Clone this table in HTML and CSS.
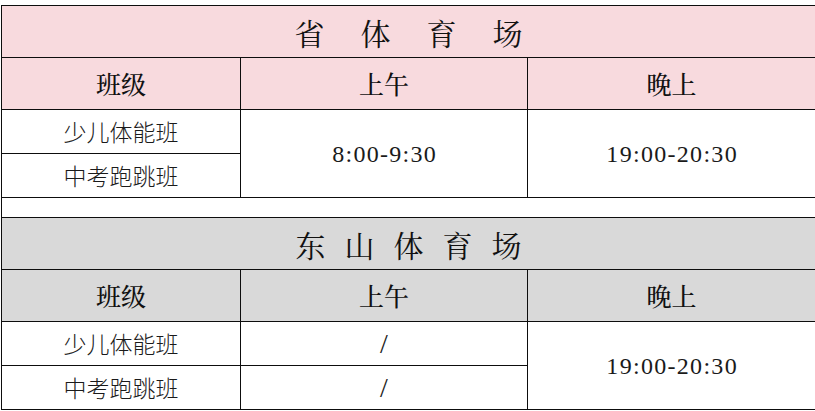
FILE: index.html
```html
<!DOCTYPE html>
<html lang="zh-CN">
<head>
<meta charset="utf-8">
<title>训练时间表</title>
<link rel="stylesheet" href="styles.css">
</head>
<body>
<div class="page">
  <table class="schedule">
    <colgroup>
      <col class="c1">
      <col class="c2">
      <col class="c3">
    </colgroup>
    <tbody>
      <tr class="title pink">
        <td colspan="3"><span class="title-text wide">省体育场</span></td>
      </tr>
      <tr class="head pink">
        <td>班级</td>
        <td>上午</td>
        <td>晚上</td>
      </tr>
      <tr class="row">
        <td class="name">少儿体能班</td>
        <td class="time" rowspan="2"><span class="digits">8:00-9:30</span></td>
        <td class="time" rowspan="2"><span class="digits">19:00-20:30</span></td>
      </tr>
      <tr class="row">
        <td class="name">中考跑跳班</td>
      </tr>
      <tr class="spacer">
        <td colspan="3"></td>
      </tr>
      <tr class="title gray">
        <td colspan="3"><span class="title-text narrow">东山体育场</span></td>
      </tr>
      <tr class="head gray">
        <td>班级</td>
        <td>上午</td>
        <td>晚上</td>
      </tr>
      <tr class="row">
        <td class="name">少儿体能班</td>
        <td class="time slash">/</td>
        <td class="time" rowspan="2"><span class="digits">19:00-20:30</span></td>
      </tr>
      <tr class="row">
        <td class="name">中考跑跳班</td>
        <td class="time slash">/</td>
      </tr>
    </tbody>
  </table>
</div>
</body>
</html>
```

FILE: styles.css
```css
html, body {
  margin: 0;
  padding: 0;
  background: #ffffff;
}

.page {
  padding: 5px 0 0 1px;
}

.schedule {
  width: 814px;
  border-collapse: collapse;
  table-layout: fixed;
}

.c1 { width: 239px; }
.c2 { width: 287px; }
.c3 { width: 288px; }

.schedule td {
  border: 1px solid #0d0d0d;
  padding: 0;
  text-align: center;
  vertical-align: middle;
  color: #1a1a1a;
}

.pink td { background: #f8dade; }
.gray td { background: #d9d9d9; }

.title td {
  height: 51px;
  font-family: "Noto Serif CJK SC", "Noto Sans CJK SC", serif;
  font-size: 30px;
  font-weight: 400;
  color: #111111;
}

.title-text.wide {
  letter-spacing: 36px;
  margin-right: -36px;
}

.title-text.narrow {
  letter-spacing: 19px;
  margin-right: -19px;
}

.head td {
  height: 51px;
  font-family: "Noto Serif CJK SC", "Noto Sans CJK SC", serif;
  font-size: 25px;
  font-weight: 500;
  color: #111111;
  line-height: 1;
}

.row td {
  height: 43px;
  line-height: 1;
}

.name {
  font-family: "Noto Sans CJK SC", sans-serif;
  font-size: 23px;
  font-weight: 300;
  color: #222222;
}

.time {
  font-family: "Liberation Serif", "DejaVu Serif", serif;
  font-size: 24px;
  color: #1a1a1a;
}

.digits {
  letter-spacing: 1.3px;
  margin-right: -1.3px;
}

.slash {
  font-size: 28px;
  font-weight: 300;
  color: #333333;
}

.spacer td {
  height: 19px;
  background: #ffffff;
}
```
